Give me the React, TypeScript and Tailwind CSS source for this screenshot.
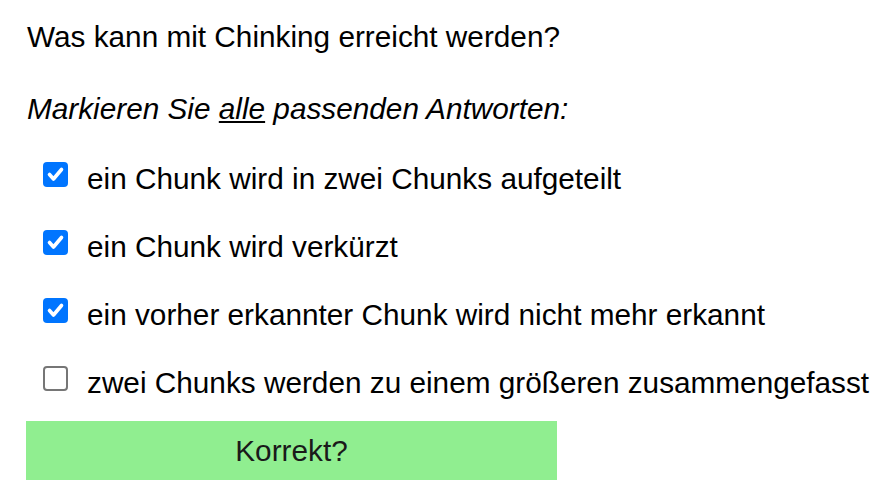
import React from 'react';

const options = [
  { text: 'ein Chunk wird in zwei Chunks aufgeteilt', checked: true },
  { text: 'ein Chunk wird verkürzt', checked: true },
  { text: 'ein vorher erkannter Chunk wird nicht mehr erkannt', checked: true },
  { text: 'zwei Chunks werden zu einem größeren zusammengefasst', checked: false },
];

function Box({ checked }: { checked: boolean }) {
  if (checked) {
    return (
      <span className="w-[25px] h-[25px] rounded-[4px] bg-[#0075ff] flex items-center justify-center shrink-0">
        <svg width="25" height="25" viewBox="0 0 25 25">
          <polyline points="6.5,12.5 10.5,17 18.5,7.5" fill="none" stroke="white" strokeWidth="3.6" strokeLinecap="round" strokeLinejoin="round" />
        </svg>
      </span>
    );
  }
  return <span className="w-[25px] h-[25px] rounded-[4px] border-2 border-[#767676] bg-white shrink-0" />;
}

export default function App() {
  return (
    <div className="min-h-screen bg-white pl-[26px] pt-[20px] font-['Liberation_Sans',Arial,sans-serif] text-[29.75px] leading-[34px] text-black">
      <p className="h-[34px] ml-px">Was kann mit Chinking erreicht werden?</p>
      <p className="h-[34px] mt-[38px] ml-px italic">
        Markieren Sie <span className="underline">alle</span> passenden Antworten:
      </p>
      <div className="mt-[36px] flex flex-col gap-[34px]">
        {options.map((o) => (
          <label key={o.text} className="flex items-start h-[34px] pl-[17px] gap-[19px] whitespace-nowrap">
            <Box checked={o.checked} />
            <span>{o.text}</span>
          </label>
        ))}
      </div>
      <button className="mt-[21px] w-[531px] h-[59px] bg-[#90ee90] text-[#1a1a1a] flex items-center justify-center">
        Korrekt?
      </button>
    </div>
  );
}
